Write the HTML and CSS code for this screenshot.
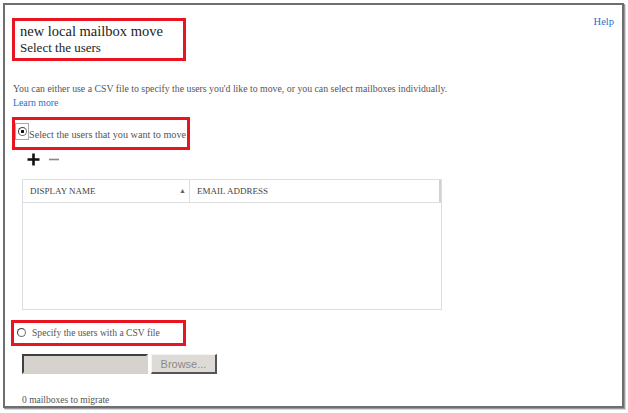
FILE: index.html
```html
<!DOCTYPE html>
<html lang="en">
<head>
<meta charset="UTF-8">
<title>new local mailbox move</title>
<link rel="stylesheet" href="styles.css">
</head>
<body>
<div class="frame">
    <div class="top-row">
        <div class="mark title-box">
            <div class="title">new local mailbox move</div>
            <div class="subtitle">Select the users</div>
        </div>
        <a class="help" href="#">Help</a>
    </div>

    <div class="intro">
        You can either use a CSV file to specify the users you'd like to move, or you can select mailboxes individually.<br>
        <a class="link" href="#">Learn more</a>
    </div>

    <div class="mark option-box first">
        <span class="radio-focus"><span class="radio checked"></span></span>
        <span class="option-text">Select the users that you want to move</span>
    </div>

    <div class="toolbar">
        <span class="tool-add">
            <svg width="13" height="13" viewBox="0 0 13 13"><path d="M6.5 0.5v12M0.5 6.5h12" stroke="#111" stroke-width="2.6" fill="none"/></svg>
        </span>
        <span class="tool-remove">
            <svg width="10" height="3" viewBox="0 0 10 3"><path d="M0 1.5h10" stroke="#888" stroke-width="1.6" fill="none"/></svg>
        </span>
    </div>

    <div class="grid">
        <div class="grid-head">
            <div class="col col-name">DISPLAY NAME <span class="sort">&#9650;</span></div>
            <div class="col col-email">EMAIL ADDRESS</div>
        </div>
        <div class="grid-body"></div>
    </div>

    <div class="mark option-box second">
        <span class="radio"></span>
        <span class="option-text">Specify the users with a CSV file</span>
    </div>

    <div class="file-row">
        <div class="file-field"></div>
        <button class="browse">Browse...</button>
    </div>

    <div class="count">0 mailboxes to migrate</div>
</div>
</body>
</html>
```

FILE: styles.css
```css
html, body {
    margin: 0;
    background-color: #ffffff;
}

body {
    padding: 3px 4px 4px 3px;
    font-family: "Liberation Serif", "DejaVu Serif", serif;
    color: #444;
}

.frame {
    height: 405px;
    box-sizing: border-box;
    border: 2px solid #6e6e6e;
    box-shadow: 1px 1px 0 #9a9a9a, 2px 2px 0 #d8d8d8;
    padding: 13px 8px 0 7px;
}

.top-row {
    display: flex;
    justify-content: space-between;
    align-items: flex-start;
}

.mark {
    border: 3px solid #e8141f;
    box-sizing: border-box;
}

.title-box {
    width: 174px;
    padding: 2px 5px;
    color: #222;
}

.title {
    font-size: 14.5px;
    line-height: 17px;
}

.subtitle {
    font-size: 13px;
    line-height: 16px;
}

.help {
    font-size: 10.5px;
    color: #2a6fc9;
    text-decoration: none;
    margin-top: -2px;
}

.intro {
    margin-top: 21px;
    padding-left: 1px;
    font-size: 9.8px;
    line-height: 14px;
    color: #555;
}

.link {
    color: #2a6fc9;
    text-decoration: none;
}

.option-box {
    display: flex;
    color: #555;
    white-space: nowrap;
}

.option-box.first {
    margin-top: 7px;
    width: 178px;
    height: 33px;
    align-items: flex-start;
    padding-top: 3px;
    font-size: 10.2px;
}

.radio-focus {
    display: flex;
    align-items: center;
    justify-content: center;
    width: 14px;
    height: 17px;
    border: 1px solid #aaa;
    box-sizing: border-box;
}

.option-box.first .option-text {
    line-height: 17px;
    padding-top: 3px;
}

.radio {
    display: inline-block;
    flex: none;
    width: 9px;
    height: 9px;
    border-radius: 50%;
    border: 1px solid #777;
    box-sizing: border-box;
    background: radial-gradient(circle, #fff 40%, #ddd 100%);
    border-top-color: #444;
    border-left-color: #444;
}

.radio.checked {
    background: radial-gradient(circle, #111 28%, #fff 34%);
}

.toolbar {
    display: flex;
    align-items: center;
    gap: 9px;
    padding-left: 15px;
    height: 18px;
}

.tool-add, .tool-remove {
    display: flex;
}

.grid {
    margin: 11px 0 0 10px;
    width: 420px;
    height: 131px;
    border: 1px solid #dcdedf;
    box-sizing: border-box;
    display: flex;
    flex-direction: column;
}

.grid-head {
    display: flex;
    height: 22px;
    border-bottom: 1px solid #dcdedf;
    font-size: 9px;
    color: #444;
}

.col {
    display: flex;
    align-items: center;
    padding-left: 7px;
    box-sizing: border-box;
}

.col-name {
    width: 167px;
    border-right: 1px solid #dcdedf;
    justify-content: space-between;
    padding-right: 3px;
}

.sort {
    font-size: 7px;
    color: #666;
}

.col-email {
    flex: 1;
    border-right: 2px solid #cfd1d2;
}

.grid-body {
    flex: 1;
}

.option-box.second {
    margin-top: 10px;
    margin-left: -1px;
    width: 175px;
    height: 26px;
    align-items: center;
    padding: 0 0 2px 3px;
    gap: 6px;
    font-size: 9.6px;
}

.file-row {
    display: flex;
    gap: 3px;
    margin: 8px 0 0 10px;
}

.file-field {
    width: 126px;
    height: 20px;
    box-sizing: border-box;
    background: #d6d3ce;
    border: 2px solid #d6d3ce;
    border-top-color: #404040;
    border-left-color: #404040;
}

.browse {
    width: 66px;
    height: 20px;
    box-sizing: border-box;
    background: #dedbd6;
    border: 1px solid #f4f4f4;
    border-right: 2px solid #555;
    border-bottom: 2px solid #555;
    font-family: "Liberation Sans", Arial, sans-serif;
    font-size: 11px;
    color: #8a8a8a;
    padding: 0;
}

.count {
    margin: 20px 0 0 10px;
    font-size: 9.5px;
    line-height: 12px;
    color: #555;
}
```
